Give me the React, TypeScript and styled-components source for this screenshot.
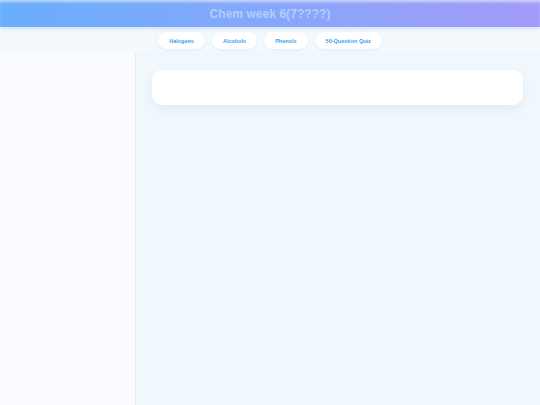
import type { FC } from "react";
import styled, { createGlobalStyle } from "styled-components";

const GlobalStyle = createGlobalStyle`
  html, body {
    margin: 0;
    padding: 0;
    height: 100%;
  }
  body {
    font-family: "Liberation Sans", Arial, sans-serif;
    background: #f0f8fd;
  }
  #root {
    height: 100%;
  }
`;

const Page = styled.div`
  display: flex;
  flex-direction: column;
  width: 100%;
  height: 100vh;
  overflow: hidden;
`;

const Header = styled.header`
  height: 27px;
  flex-shrink: 0;
  display: flex;
  align-items: center;
  justify-content: center;
  background: linear-gradient(90deg, #69aefc 0%, #8aa6fb 55%, #a39bfa 100%);
  box-shadow: inset 0 3px 3px -1px rgba(255, 255, 255, 0.55),
    0 2px 4px rgba(120, 150, 230, 0.25);
  position: relative;
  z-index: 1;
`;

const Title = styled.h1`
  margin: 0;
  font-size: 12px;
  font-weight: 700;
  color: rgba(185, 215, 252, 0.85);
  letter-spacing: 0.05px;
`;

const Nav = styled.nav`
  height: 26px;
  flex-shrink: 0;
  display: flex;
  align-items: center;
  justify-content: center;
  gap: 7px;
  background: #f3f9fd;
`;

const NavButton = styled.button`
  height: 17px;
  margin-top: 1px;
  padding: 0 11px;
  border: none;
  border-radius: 9px;
  background: #ffffff;
  color: #3a9ff0;
  font-family: "Liberation Sans", Arial, sans-serif;
  font-size: 5.5px;
  font-weight: 700;
  box-shadow: 0 1px 3px rgba(150, 180, 220, 0.18);
  cursor: pointer;
`;

const Body = styled.div`
  flex: 1;
  display: flex;
  min-height: 0;
`;

const Sidebar = styled.aside`
  width: 135px;
  flex-shrink: 0;
  background: #f9fbfe;
  border-right: 1px solid #e1e9f1;
`;

const Main = styled.main`
  flex: 1;
  padding: 17px 17px 16px 16px;
  background: #f1f8fd;
`;

const Card = styled.section`
  height: 35px;
  background: #ffffff;
  border-radius: 10px;
  box-shadow: 0 4px 10px rgba(170, 190, 220, 0.22);
`;

const tabs = ["Halogens", "Alcohols", "Phenols", "50-Question Quiz"];

const App: FC = () => {
  return (
    <Page>
      <GlobalStyle />
      <Header>
        <Title>Chem week 6(7????)</Title>
      </Header>
      <Nav>
        {tabs.map((t) => (
          <NavButton key={t}>{t}</NavButton>
        ))}
      </Nav>
      <Body>
        <Sidebar />
        <Main>
          <Card />
        </Main>
      </Body>
    </Page>
  );
};

export default App;
